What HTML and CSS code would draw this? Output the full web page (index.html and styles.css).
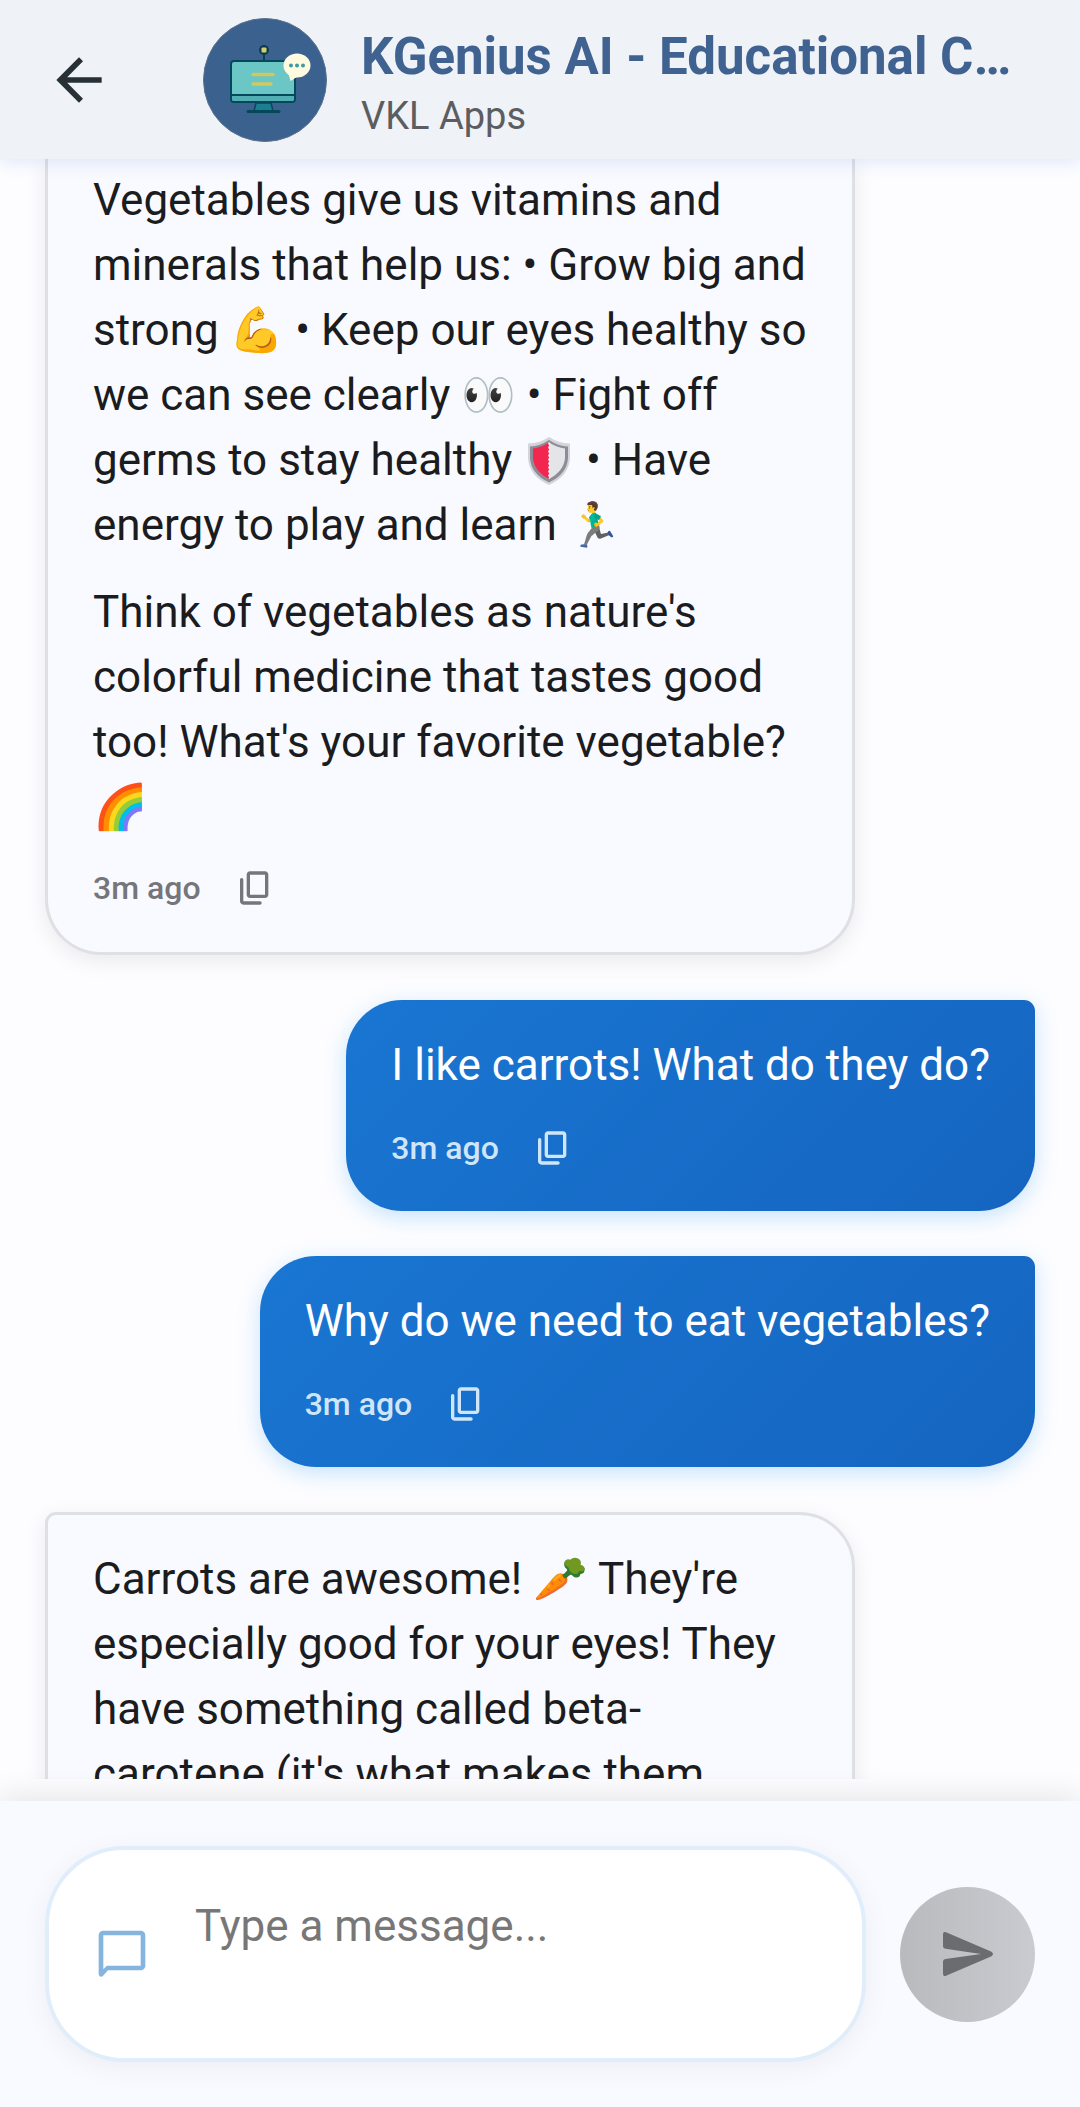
FILE: index.html
```html
<!DOCTYPE html>
<html lang="en">
<head>
<meta charset="utf-8">
<meta name="viewport" content="width=device-width, initial-scale=1">
<title>KGenius AI</title>
<link rel="stylesheet" href="styles.css">
</head>
<body>
<svg class="sprite" aria-hidden="true">
  <symbol id="copy" viewBox="0 0 24 24"><path d="M15 20H5V7c0-.55-.45-1-1-1s-1 .45-1 1v13c0 1.1.9 2 2 2h10c.55 0 1-.45 1-1s-.45-1-1-1zm5-4V4c0-1.1-.9-2-2-2H9c-1.1 0-2 .9-2 2v12c0 1.1.9 2 2 2h9c1.1 0 2-.9 2-2zm-2 0H9V4h9v12z"/></symbol>
</svg>
<div class="app">
  <header class="topbar">
    <button class="back" type="button" aria-label="Back">
      <svg viewBox="0 0 24 24"><path d="M20 11H7.83l5.59-5.59L12 4l-8 8 8 8 1.41-1.41L7.83 13H20v-2z"/></svg>
    </button>
    <svg class="avatar" viewBox="0 0 124 124" aria-hidden="true">
      <circle cx="62" cy="62" r="61.5" fill="#3b618f" stroke="#5f7189"/>
      <path d="M61 33v10" stroke="#0b3f56" stroke-width="2"/>
      <circle cx="61" cy="32" r="5" fill="#0d3b4c"/>
      <rect x="58.5" y="29.5" width="5" height="5" rx="1" fill="#d5cf72"/>
      <path d="M53 85h15l2 8H51z" fill="#1c7e8e" stroke="#07475c" stroke-width="1.5"/>
      <path d="M45 93.5h31" stroke="#07475c" stroke-width="3" stroke-linecap="round"/>
      <rect x="28" y="43" width="64" height="41" rx="3" fill="#6bc6c6" stroke="#07475c" stroke-width="2"/>
      <path d="M29 77h62v4q0 2-2 2H31q-2 0-2-2z" fill="#50aeb4"/>
      <path d="M28 77h64" stroke="#07475c" stroke-width="2"/>
      <path d="M50 56.5h20M50 66h18" stroke="#d3c75d" stroke-width="3.5" stroke-linecap="round"/>
      <path d="M85 54l2.500 9 8-5z" fill="#fffbe0"/>
      <ellipse cx="94" cy="47.500" rx="13.500" ry="12" fill="#fffbe0"/>
      <g fill="#3f9ba2"><circle cx="88" cy="47.500" r="2"/><circle cx="94" cy="47.500" r="2"/><circle cx="100" cy="47.500" r="2"/></g>
    </svg>
    <div class="heading">
      <h1>KGenius AI - Educational Chatbot</h1>
      <p>VKL Apps</p>
    </div>
  </header>

  <main class="chat">
    <article class="bubble bot continued">
      <p>Vegetables give us vitamins and<br>minerals that help us: • Grow big and<br>strong 💪 • Keep our eyes healthy so<br>we can see clearly 👀 • Fight off<br>germs to stay healthy <svg class="shield" viewBox="0 0 44 48" role="img" aria-label="shield"><path d="M22 0Q31 6 43 6.500V21Q42 39 22 48 2 39 1 21V6.500Q13 6 22 0z" fill="#d5d4da"/><path d="M22 3Q31 9 41 9.500V21Q40 37 22 45.500 4 37 3 21V9.500Q13 9 22 3z" fill="#8e8c98"/><path d="M22 5.500Q14 10.500 6 11.500V21Q7 34 22 42z" fill="#f3264f"/><path d="M22 5.500Q30 10.500 38 11.500V21Q37 34 22 42z" fill="#e4e5e9"/><path d="M22 5.500V42" stroke="#fff" stroke-width="1.500" stroke-dasharray="2 2"/></svg> • Have<br>energy to play and learn 🏃‍♂️</p>
      <p>Think of vegetables as nature's<br>colorful medicine that tastes good<br>too! What's your favorite vegetable?<br>🌈</p>
      <footer class="meta"><time>3m ago</time><button type="button" aria-label="Copy"><svg><use href="#copy"/></svg></button></footer>
    </article>
    <article class="bubble user">
      <p>I like carrots! What do they do?</p>
      <footer class="meta"><time>3m ago</time><button type="button" aria-label="Copy"><svg><use href="#copy"/></svg></button></footer>
    </article>
    <article class="bubble user">
      <p>Why do we need to eat vegetables?</p>
      <footer class="meta"><time>3m ago</time><button type="button" aria-label="Copy"><svg><use href="#copy"/></svg></button></footer>
    </article>
    <article class="bubble bot">
      <p>Carrots are awesome! 🥕 They're<br>especially good for your eyes! They<br>have something called beta-<br>carotene (it's what makes them</p>
    </article>
  </main>

  <form class="composer">
    <label class="field">
      <svg viewBox="0 0 24 24" aria-hidden="true"><path d="M20 2H4c-1.100 0-2 .9-2 2v16.200c0 1.500 1 2 2 1L6 19h14c1.100 0 2-.9 2-2V4c0-1.100-.9-2-2-2zm0 15H5.500L4 18.500V4h16v13z"/></svg>
      <textarea placeholder="Type a message..." aria-label="Message"></textarea>
    </label>
    <button class="send" type="button" aria-label="Send">
      <svg viewBox="0 0 50 44"><path d="M0 2.500Q0-1 3 .3L48 19.500Q52 22 48 24.500L3 43.700Q0 45 0 41.500V29.500Q0 27.200 2.500 27L38 22 2.500 16.800Q0 16.500 0 14.200Z"/></svg>
    </button>
  </form>
</div>
</body>
</html>
```
FILE: styles.css
```css
* { box-sizing: border-box; }
body, h1, p { margin: 0; }
body {
  font-family: Roboto, "Noto Color Emoji", sans-serif;
  font-size: 44px;
  line-height: 65px;
  color: #1b1c20;
  background: #fdfdff;
}
button {
  display: flex;
  padding: 0;
  border: 0;
  background: none;
  color: inherit;
}
svg { display: block; flex: none; fill: currentColor; }
.sprite { width: 0; height: 0; position: absolute; }

.app { display: flex; flex-direction: column; height: 100vh; }

.topbar {
  position: relative;
  z-index: 1;
  flex: none;
  display: flex;
  align-items: center;
  padding: 18px 45px 17px;
  background: #eff2f7;
  box-shadow: 0 3px 16px rgba(60, 110, 210, .16);
}
.back { color: #263036; }
.back svg { width: 68px; height: 68px; }
.avatar { width: 124px; height: 124px; margin: 0 34px 0 90px; fill: none; }
.heading { flex: 1; min-width: 0; padding-top: 6px; }
.heading h1 {
  font-size: 51px;
  line-height: 66px;
  font-weight: 700;
  color: #3f6290;
  white-space: nowrap;
  overflow: hidden;
  text-overflow: ellipsis;
}
.heading p { font-size: 38px; line-height: 52px; color: #5c5d60; }

.chat {
  flex: 1;
  min-height: 0;
  display: flex;
  flex-direction: column;
  gap: 45px;
  padding: 0 45px;
  overflow-y: auto;
  scrollbar-width: none;
}
.bubble { flex: none; padding: 33px 45px 43px; border-radius: 56px; }
.bubble p + p { margin-top: 22px; }
.bot {
  align-self: flex-start;
  width: 810px;
  max-width: 85%;
  padding: 32px 45px 44px;
  background: #f9faff;
  border: 3px solid #dfe0e4;
  border-top-left-radius: 11px;
  box-shadow: 0 6px 22px rgba(0, 0, 0, .08);
}
.continued {
  padding-top: 9px;
  border-top: 0;
  border-top-left-radius: 0;
  border-top-right-radius: 0;
}
.shield {
  display: inline-block;
  width: 44px;
  height: 48px;
  margin: 0 4px;
  vertical-align: -10px;
}
.user {
  align-self: flex-end;
  color: #fff;
  background: linear-gradient(135deg, #1976d2, #1565c0);
  border-top-right-radius: 11px;
  box-shadow: 0 6px 22px rgba(33, 150, 243, .25);
}
.meta {
  display: flex;
  align-items: center;
  gap: 34px;
  margin-top: 30px;
  font-size: 32px;
  line-height: 40px;
  font-weight: 500;
  color: #75767b;
}
.bot .meta { margin-top: 28px; }
.meta svg { width: 40px; height: 40px; }
.user .meta { color: #cfe6fa; }

.composer {
  position: relative;
  flex: none;
  display: flex;
  align-items: center;
  gap: 34px;
  margin-top: 22px;
  padding: 45px;
  background: #f9faff;
  box-shadow: 0 -6px 28px rgba(0, 0, 0, .09);
}
.field {
  flex: 1;
  min-width: 0;
  display: flex;
  align-items: center;
  gap: 45px;
  padding: 44px 45px;
  border: 4px solid #e0edfa;
  border-radius: 79px;
  background: #fff;
  box-shadow: 0 6px 28px rgba(0, 0, 0, .05);
  color: #85b5de;
}
.field svg { width: 56px; height: 56px; }
.field textarea {
  flex: 1;
  min-width: 0;
  height: 120px;
  padding: 0;
  border: 0;
  outline: 0;
  resize: none;
  background: none;
  font: inherit;
  color: #1b1c20;
}
.field textarea::placeholder { color: #777; }
.send {
  flex: none;
  align-items: center;
  justify-content: center;
  width: 135px;
  height: 135px;
  border-radius: 50%;
  background: linear-gradient(90deg, #b9babe, #cacbd0);
  color: #6b6c70;
}
.send svg { width: 50px; height: 44px; }
```
